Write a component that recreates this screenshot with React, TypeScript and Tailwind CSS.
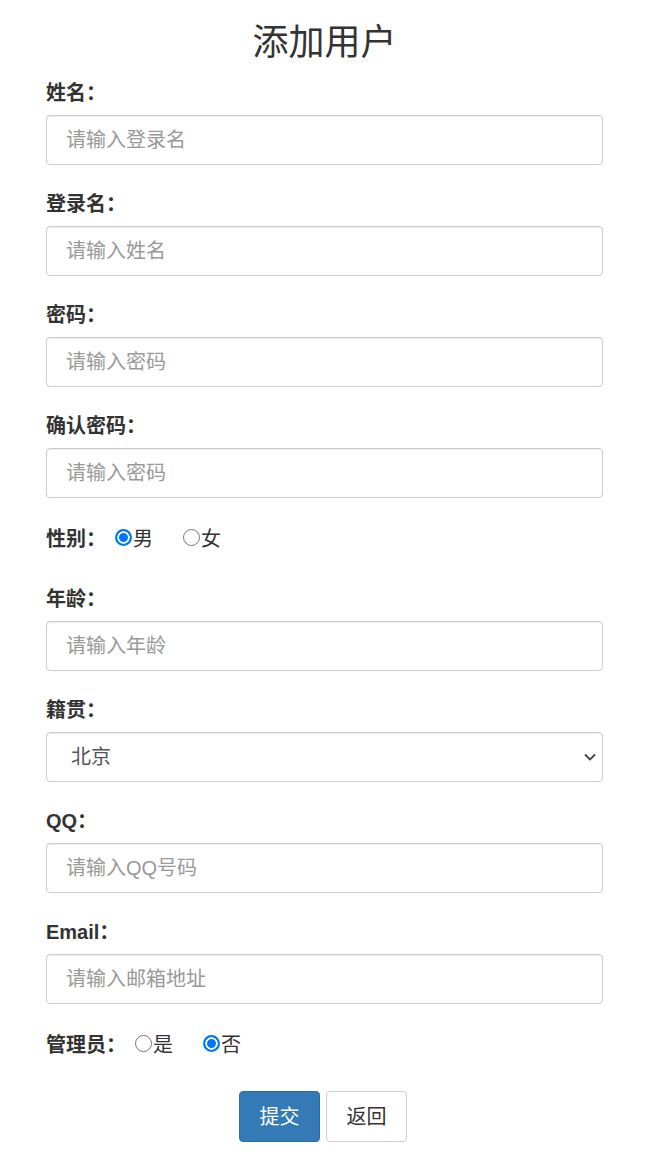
const inputCls =
  'block w-full h-[50px] pl-[19px] pr-4 text-[20px] text-[#555] bg-white border border-[#ccc] rounded-[4px] shadow-[inset_0_1px_1px_rgba(0,0,0,0.075)] placeholder:text-[#999] outline-none';

const labelCls = 'block h-[28px] leading-[28px] mb-2 text-[20px] font-bold text-[#333]';

function Field({ label, placeholder, type = 'text' }: { label: string; placeholder: string; type?: string }) {
  return (
    <div className="mb-[25px]">
      <label className={labelCls}>{label}</label>
      <input type={type} placeholder={placeholder} className={inputCls} />
    </div>
  );
}

function RadioRow({
  label,
  name,
  options,
  checked,
}: {
  label: string;
  name: string;
  options: string[];
  checked: string;
}) {
  return (
    <div className="flex items-center h-8 mb-[30px] text-[20px] text-[#333]">
      <span className="font-bold">{label}</span>
      {options.map((opt, i) => (
        <label key={opt} className={`flex items-center ${i === 0 ? 'ml-[9px]' : 'ml-[30px]'}`}>
          <input
            type="radio"
            name={name}
            defaultChecked={opt === checked}
            className="appearance-none shrink-0 w-[17px] h-[17px] m-0 mr-[1px] -mt-[3px] rounded-full border-[1.5px] border-[#767676] bg-white checked:border-2 checked:border-[#0075ff] checked:bg-[#0075ff] checked:shadow-[inset_0_0_0_2px_white]"
          />
          <span>{opt}</span>
        </label>
      ))}
    </div>
  );
}

export default function App() {
  return (
    <div className="min-h-screen bg-white px-[46px] pt-[23px] font-['Liberation_Sans','Noto_Sans_CJK_SC',sans-serif] text-[#333]">
      <h2 className="text-center text-[36px] leading-[40px] font-normal mb-4">添加用户</h2>
      <form>
        <Field label="姓名：" placeholder="请输入登录名" />
        <Field label="登录名：" placeholder="请输入姓名" />
        <Field label="密码：" placeholder="请输入密码" type="password" />
        <Field label="确认密码：" placeholder="请输入密码" type="password" />

        <RadioRow label="性别：" name="sex" options={['男', '女']} checked="男" />

        <Field label="年龄：" placeholder="请输入年龄" />

        <div className="mb-[25px]">
          <label className={labelCls}>籍贯：</label>
          <div className="relative">
            <select className="appearance-none block w-full h-[50px] pl-6 pr-8 text-[20px] text-[#555] bg-white border border-[#ccc] rounded-[4px] shadow-[inset_0_1px_1px_rgba(0,0,0,0.075)] outline-none">
              <option>北京</option>
              <option>上海</option>
              <option>广州</option>
              <option>深圳</option>
            </select>
            <svg
              className="pointer-events-none absolute right-[7px] top-[21px] w-3 h-2"
              viewBox="0 0 12 8"
              fill="none"
              stroke="#444"
              strokeWidth="1.8"
            >
              <path d="M1 1.5 L6 6.5 L11 1.5" />
            </svg>
          </div>
        </div>

        <Field label="QQ：" placeholder="请输入QQ号码" />
        <Field label="Email：" placeholder="请输入邮箱地址" />

        <RadioRow label="管理员：" name="admin" options={['是', '否']} checked="否" />

        <div className="flex justify-center gap-[6px] pr-[3px]">
          <button
            type="submit"
            className="w-[81px] h-[51px] text-[20px] text-white bg-[#337ab7] border border-[#2e6da4] rounded-[4px]"
          >
            提交
          </button>
          <button
            type="button"
            className="w-[81px] h-[51px] text-[20px] text-[#333] bg-white border border-[#ccc] rounded-[4px]"
          >
            返回
          </button>
        </div>
      </form>
    </div>
  );
}
